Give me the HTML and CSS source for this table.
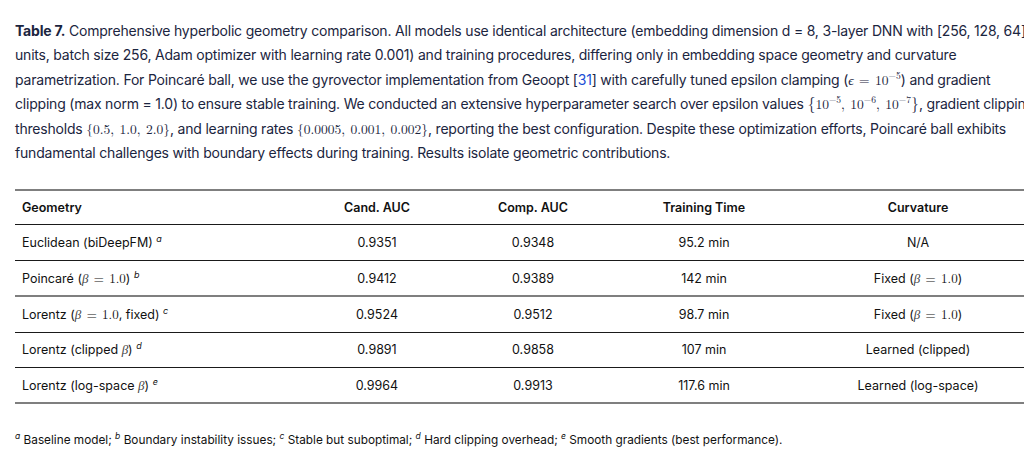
FILE: index.html
```html
<!DOCTYPE html>
<html lang="en">
<head>
<meta charset="utf-8">
<title>Table 7</title>
<link rel="stylesheet" href="styles.css">
</head>
<body>
<div class="page">
  <p class="caption"><b>Table 7.</b> Comprehensive hyperbolic geometry comparison. All models use identical architecture (embedding dimension d = 8, 3-layer DNN with [256, 128, 64]<br>units, batch size 256, Adam optimizer with learning rate 0.001) and training procedures, differing only in embedding space geometry and curvature<br>parametrization. For Poincaré ball, we use the gyrovector implementation from Geoopt [<a class="ref" href="#r31">31</a>] with carefully tuned epsilon clamping (<span class="m"><i>ϵ</i> = 10<sup>−5</sup></span>) and gradient<br>clipping (max norm = 1.0) to ensure stable training. We conducted an extensive hyperparameter search over epsilon values <span class="m"><span class="br">{</span>10<sup>−5</sup>, 10<sup>−6</sup>, 10<sup>−7</sup><span class="br">}</span></span>, gradient clipping<br>thresholds <span class="m">{0.5, 1.0, 2.0}</span>, and learning rates <span class="m">{0.0005, 0.001, 0.002}</span>, reporting the best configuration. Despite these optimization efforts, Poincaré ball exhibits<br>fundamental challenges with boundary effects during training. Results isolate geometric contributions.</p>

  <table class="results">
    <colgroup>
      <col class="c1"><col class="c2"><col class="c3"><col class="c4"><col class="c5">
    </colgroup>
    <thead>
      <tr><th class="left">Geometry</th><th>Cand. AUC</th><th>Comp. AUC</th><th>Training Time</th><th>Curvature</th></tr>
    </thead>
    <tbody>
      <tr><td class="left">Euclidean (biDeepFM) <sup class="fn">a</sup></td><td>0.9351</td><td>0.9348</td><td>95.2 min</td><td>N/A</td></tr>
      <tr class="group"><td class="left">Poincaré (<span class="m"><i>β</i> = 1.0</span>) <sup class="fn">b</sup></td><td>0.9412</td><td>0.9389</td><td>142 min</td><td>Fixed (<span class="m"><i>β</i> = 1.0</span>)</td></tr>
      <tr><td class="left">Lorentz (<span class="m"><i>β</i> = 1.0</span>, fixed) <sup class="fn">c</sup></td><td>0.9524</td><td>0.9512</td><td>98.7 min</td><td>Fixed (<span class="m"><i>β</i> = 1.0</span>)</td></tr>
      <tr><td class="left">Lorentz (clipped <span class="m"><i>β</i></span>) <sup class="fn">d</sup></td><td>0.9891</td><td>0.9858</td><td>107 min</td><td>Learned (clipped)</td></tr>
      <tr><td class="left">Lorentz (log-space <span class="m"><i>β</i></span>) <sup class="fn">e</sup></td><td>0.9964</td><td>0.9913</td><td>117.6 min</td><td>Learned (log-space)</td></tr>
    </tbody>
  </table>

  <p class="notes"><sup>a</sup> Baseline model; <sup>b</sup> Boundary instability issues; <sup>c</sup> Stable but suboptimal; <sup>d</sup> Hard clipping overhead; <sup>e</sup> Smooth gradients (best performance).</p>
</div>
</body>
</html>
```

FILE: styles.css
```css
html, body {
  margin: 0;
  padding: 0;
  background: #ffffff;
  overflow: hidden;
}

.page {
  width: 1025px;
  padding: 19px 0 0 15px;
}

.caption {
  margin: 0;
  font-family: Inter, "Noto Sans", sans-serif;
  font-size: 14px;
  line-height: 24.4px;
  color: #1b2540;
  white-space: nowrap;
  letter-spacing: -0.2px;
}

.caption b {
  font-weight: 700;
}

.ref {
  color: #1a4fd6;
  text-decoration: none;
}

.m {
  font-family: "Latin Modern Roman", "Liberation Serif", "DejaVu Serif", serif;
  font-size: 13.5px;
  line-height: 1;
  letter-spacing: 0;
  word-spacing: 1px;
}

.m i {
  font-style: italic;
}

.m sup {
  font-size: 9.5px;
  line-height: 0;
  vertical-align: 6px;
}

.br {
  font-size: 16px;
  line-height: 0;
}

.results {
  margin-top: 24px;
  width: 1025px;
  table-layout: fixed;
  border-collapse: collapse;
  font-family: Inter, "Noto Sans", sans-serif;
  font-size: 12.5px;
  color: #111111;
  border-top: 2px solid #7f7f7f;
  border-bottom: 2px solid #7f7f7f;
}

.c1 { width: 285px; }
.c2 { width: 154px; }
.c3 { width: 158px; }
.c4 { width: 184px; }
.c5 { width: 244px; }

.results th,
.results td {
  height: 34.4px;
  padding: 0 7px;
  text-align: center;
  vertical-align: middle;
  white-space: nowrap;
}

.results th {
  height: 33px;
  font-weight: 600;
  border-bottom: 1px solid #1a1a1a;
}

.results td {
  border-bottom: 1px solid #1a1a1a;
}

.results .left {
  text-align: left;
}

.results tr.group td {
  border-bottom: 2px solid #7f7f7f;
}

.results .m {
  font-size: 13px;
}

.results .m i {
  color: #444;
}

.fn {
  font-style: italic;
  font-size: 9px;
  vertical-align: 5px;
  line-height: 0;
}

.notes {
  margin: 29px 0 0 0;
  font-family: Inter, "Noto Sans", sans-serif;
  font-size: 11.8px;
  color: #111111;
  white-space: nowrap;
}

.notes sup {
  font-style: italic;
  font-size: 8.5px;
  vertical-align: 5px;
  line-height: 0;
}
```
